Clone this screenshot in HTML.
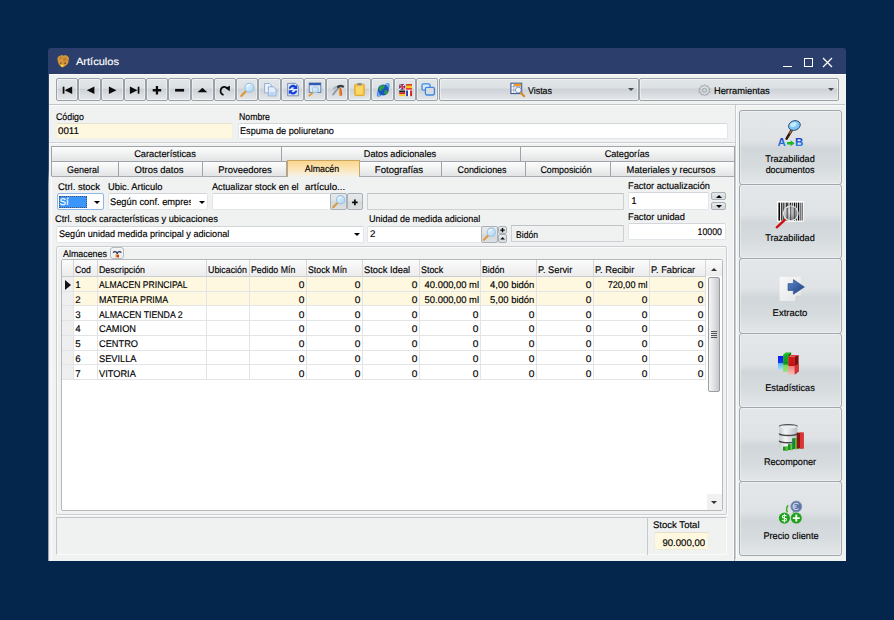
<!DOCTYPE html>
<html>
<head>
<meta charset="utf-8">
<title>Artículos</title>
<style>
*{box-sizing:border-box;margin:0;padding:0}
html,body{width:894px;height:620px;overflow:hidden;background:#04264c}
body{font-family:"Liberation Sans",sans-serif;font-size:9.7px;color:#000;-webkit-text-stroke-width:0.15px;text-rendering:geometricPrecision;position:relative}
.a{position:absolute}
.t{position:absolute;white-space:nowrap}
.tb{position:absolute;border:1px solid #9aa2a9;border-radius:2px;background:linear-gradient(#e2e6e9 0%,#dce1e4 42%,#cdd2d6 50%,#d7dbdf 70%,#e5e8ea 100%);box-shadow:inset 0 0 0 1px rgba(255,255,255,.45)}
.tbs{position:absolute;border:1px solid #a9b0b6;border-radius:2px;background:linear-gradient(#e6e9eb 0%,#dfe3e6 45%,#d3d8db 52%,#dde0e3 100%)}
.tab{position:absolute;border:1px solid #a0a4a8;border-bottom:none;background:linear-gradient(#fcfcfc,#f1f2f2 45%,#e2e4e5)}
.inp{position:absolute;background:#fff;border:1px solid #e2e5e9;border-top-color:#d2d6da;border-radius:2px}
.ro{position:absolute;background:#f0f1f1;border:1px solid #cdd0d3;border-top-color:#bfc2c6}
.sb{position:absolute;border:1px solid #9fa8ad;border-radius:3px;background:linear-gradient(#e3e7e9 0%,#dfe3e6 40%,#d1d6da 52%,#d6dbde 75%,#e2e6e8 100%);box-shadow:inset 0 0 0 1px rgba(255,255,255,.35)}
.hd{position:absolute;background:linear-gradient(#fbfbfb,#ececed);border-right:1px solid #d4d6d9;border-bottom:1px solid #c9ccd0}
.c{position:absolute;border-right:1px solid #e2e4e6;border-bottom:1px solid #e2e4e6;background:#fff}
.y{background:#fff8e0}
.ind{background:#efefef}
</style>
</head>
<body>
<div class="a" style="left:48px;top:48px;width:798px;height:30px;background:#2c3e6b;border-radius:3px 3px 0 0"></div>
<div class="a" style="left:48px;top:74px;width:798px;height:486.5px;background:#f0f1f1"></div>
<div class="a" style="left:48px;top:74px;width:1px;height:486.5px;background:linear-gradient(#2c3e6b 0,#33466f 95px,#8f99ab 110px,#9aa3b3 100%)"></div>
<div class="a" style="left:49px;top:74px;width:797px;height:1px;background:#fbfbfb"></div>
<div class="t" style="top:57.00px;font-size:10.3px;line-height:12px;height:12px;color:#fff;left:75.80px;transform-origin:0 50%;transform:scaleX(1.0731);">Artículos</div>
<div class="a" style="left:782.5px;top:65.5px;width:9px;height:1px;background:#fff"></div>
<div class="a" style="left:803.5px;top:57.5px;width:9px;height:9.5px;border:1.2px solid #fff"></div>
<svg class="a" style="left:822px;top:57px" width="11" height="11" viewBox="0 0 11 11"><path d="M1 1 L10 10 M10 1 L1 10" stroke="#fff" stroke-width="1.25"/></svg>
<div class="a" style="left:49px;top:104px;width:796px;height:1px;background:#c3c6c9"></div>
<div class="a" style="left:49px;top:105px;width:796px;height:1px;background:#fafafa"></div>
<div class="a" style="left:49px;top:142px;width:686px;height:1px;background:#cfd1d4"></div>
<div class="a" style="left:49px;top:143px;width:686px;height:1px;background:#f9f9f9"></div>
<div class="tb" style="left:56px;top:78px;width:22px;height:23px;"></div>
<div class="tb" style="left:78px;top:78px;width:23px;height:23px;"></div>
<div class="tb" style="left:101px;top:78px;width:23px;height:23px;"></div>
<div class="tb" style="left:124px;top:78px;width:22px;height:23px;"></div>
<div class="tb" style="left:146px;top:78px;width:22px;height:23px;"></div>
<div class="tb" style="left:168px;top:78px;width:23px;height:23px;"></div>
<div class="tb" style="left:191px;top:78px;width:23px;height:23px;"></div>
<div class="tb" style="left:214px;top:78px;width:22px;height:23px;"></div>
<div class="tb" style="left:236px;top:78px;width:22px;height:23px;"></div>
<div class="tb" style="left:258px;top:78px;width:23px;height:23px;"></div>
<div class="tb" style="left:281px;top:78px;width:23px;height:23px;"></div>
<div class="tb" style="left:304px;top:78px;width:22px;height:23px;"></div>
<div class="tb" style="left:326px;top:78px;width:22px;height:23px;"></div>
<div class="tb" style="left:348px;top:78px;width:23px;height:23px;"></div>
<div class="tb" style="left:371px;top:78px;width:23px;height:23px;"></div>
<div class="tb" style="left:394px;top:78px;width:22px;height:23px;"></div>
<div class="tb" style="left:416px;top:78px;width:22px;height:23px;"></div>
<div class="tb" style="left:439px;top:78px;width:200px;height:23px;"></div>
<div class="tb" style="left:639px;top:78px;width:200px;height:23px;"></div>
<div class="t" style="top:86.00px;font-size:9.7px;line-height:12px;height:12px;left:527.70px;transform-origin:0 50%;transform:scaleX(0.9146);">Vistas</div>
<div class="t" style="top:86.00px;font-size:9.7px;line-height:12px;height:12px;left:714.00px;transform-origin:0 50%;transform:scaleX(0.9584);">Herramientas</div>
<div class="a" style="left:627.5px;top:88.2px;width:0px;height:0px;border:3px solid transparent;border-top:3px solid #4a4a4a;border-bottom:none"></div>
<div class="a" style="left:828.3px;top:88px;width:0px;height:0px;border:3px solid transparent;border-top:3px solid #4a4a4a;border-bottom:none"></div>
<div class="t" style="top:112.00px;font-size:9.7px;line-height:12px;height:12px;left:55.70px;transform-origin:0 50%;transform:scaleX(0.9076);">Código</div>
<div class="inp" style="left:56px;top:123px;width:177px;height:16px;background:#fff8e0;border-color:#f4f0e2;border-top-color:#e6e2d2"></div>
<div class="t" style="top:126.00px;font-size:9.7px;line-height:12px;height:12px;left:58.10px;transform-origin:0 50%;transform:scaleX(1.0067);">0011</div>
<div class="t" style="top:112.00px;font-size:9.7px;line-height:12px;height:12px;left:238.70px;transform-origin:0 50%;transform:scaleX(0.8985);">Nombre</div>
<div class="inp" style="left:238px;top:123px;width:490px;height:16px;"></div>
<div class="t" style="top:126.00px;font-size:9.7px;line-height:12px;height:12px;left:240.00px;transform-origin:0 50%;transform:scaleX(0.9422);">Espuma de poliuretano</div>
<div class="tab" style="left:51px;top:146px;width:231px;height:15px;"></div>
<div class="t" style="top:149.00px;font-size:9.7px;line-height:12px;height:12px;left:165.30px;transform-origin:0 50%;transform:translateX(-47.770%) scaleX(0.9554);">Características</div>
<div class="tab" style="left:281px;top:146px;width:240px;height:15px;"></div>
<div class="t" style="top:149.00px;font-size:9.7px;line-height:12px;height:12px;left:399.70px;transform-origin:0 50%;transform:translateX(-47.343%) scaleX(0.9469);">Datos adicionales</div>
<div class="tab" style="left:520px;top:146px;width:215px;height:15px;"></div>
<div class="t" style="top:149.00px;font-size:9.7px;line-height:12px;height:12px;left:626.60px;transform-origin:0 50%;transform:translateX(-47.208%) scaleX(0.9442);">Categorías</div>
<div class="tab" style="left:51px;top:161px;width:68px;height:15px;"></div>
<div class="t" style="top:165.00px;font-size:9.7px;line-height:12px;height:12px;left:83.40px;transform-origin:0 50%;transform:translateX(-46.363%) scaleX(0.9273);">General</div>
<div class="tab" style="left:118px;top:161px;width:85px;height:15px;"></div>
<div class="t" style="top:165.00px;font-size:9.7px;line-height:12px;height:12px;left:159.00px;transform-origin:0 50%;transform:translateX(-48.864%) scaleX(0.9773);">Otros datos</div>
<div class="tab" style="left:202px;top:161px;width:85px;height:15px;"></div>
<div class="t" style="top:165.00px;font-size:9.7px;line-height:12px;height:12px;left:244.50px;transform-origin:0 50%;transform:translateX(-48.818%) scaleX(0.9764);">Proveedores</div>
<div class="tab" style="left:359px;top:161px;width:83px;height:15px;"></div>
<div class="t" style="top:165.00px;font-size:9.7px;line-height:12px;height:12px;left:398.90px;transform-origin:0 50%;transform:translateX(-49.221%) scaleX(0.9844);">Fotografías</div>
<div class="tab" style="left:441px;top:161px;width:85px;height:15px;"></div>
<div class="t" style="top:165.00px;font-size:9.7px;line-height:12px;height:12px;left:481.70px;transform-origin:0 50%;transform:translateX(-45.893%) scaleX(0.9179);">Condiciones</div>
<div class="tab" style="left:525px;top:161px;width:86px;height:15px;"></div>
<div class="t" style="top:165.00px;font-size:9.7px;line-height:12px;height:12px;left:566.40px;transform-origin:0 50%;transform:translateX(-45.746%) scaleX(0.9149);">Composición</div>
<div class="tab" style="left:610px;top:161px;width:125px;height:15px;"></div>
<div class="t" style="top:165.00px;font-size:9.7px;line-height:12px;height:12px;left:671.10px;transform-origin:0 50%;transform:translateX(-48.220%) scaleX(0.9644);">Materiales y recursos</div>
<div class="a" style="left:51px;top:176px;width:684px;height:385px;border:1px solid #a7abaf;border-left-color:#fbfbfb;border-bottom:none;background:#f0f1f1"></div>
<div class="a" style="left:733px;top:177px;width:1px;height:383px;background:#fbfbfb"></div>
<div class="a" style="left:287px;top:160px;width:73px;height:17px;border:1px solid #c9a55f;border-bottom:none;background:linear-gradient(#fbd68f,#fce3b1 45%,#f7efdc 85%,#f1f0ec)"></div>
<div class="t" style="top:164.00px;font-size:9.7px;line-height:12px;height:12px;left:322.00px;transform-origin:0 50%;transform:translateX(-45.574%) scaleX(0.9115);">Almacén</div>
<div class="t" style="top:182.00px;font-size:9.7px;line-height:12px;height:12px;left:58.20px;transform-origin:0 50%;transform:scaleX(0.9741);">Ctrl. stock</div>
<div class="t" style="top:182.00px;font-size:9.7px;line-height:12px;height:12px;left:107.60px;transform-origin:0 50%;transform:scaleX(0.9628);">Ubic. Articulo</div>
<div class="t" style="top:182.00px;font-size:9.7px;line-height:12px;height:12px;left:212.30px;transform-origin:0 50%;transform:scaleX(0.9459);">Actualizar stock en el</div>
<div class="t" style="top:182.00px;font-size:9.7px;line-height:12px;height:12px;left:304.90px;transform-origin:0 50%;transform:scaleX(1.0102);">artículo...</div>
<div class="t" style="top:181.00px;font-size:9.7px;line-height:12px;height:12px;left:628.00px;transform-origin:0 50%;transform:scaleX(0.9506);">Factor actualización</div>
<div class="inp" style="left:57px;top:193px;width:47px;height:17px;border:1px solid #8fb6ea"></div>
<div class="a" style="left:59px;top:196px;width:28px;height:12px;background:#3a96fd;outline:1px dotted #4a4f58;outline-offset:-1px"></div>
<div class="t" style="top:197.00px;font-size:9.7px;line-height:12px;height:12px;color:#fff;left:59.50px;transform-origin:0 50%;transform:scaleX(1.0000);">Sí</div>
<div class="a" style="left:94px;top:201px;width:0px;height:0px;border:3px solid transparent;border-top:3px solid #000;border-bottom:none"></div>
<div class="inp" style="left:108px;top:193px;width:100px;height:17px;"></div>
<div class="t" style="top:197.00px;font-size:9.7px;line-height:12px;height:12px;left:110.40px;transform-origin:0 50%;transform:scaleX(0.9590);">Según conf. empres</div>
<div class="a" style="left:191px;top:195px;width:5px;height:13px;background:#fff"></div>
<div class="a" style="left:198.5px;top:201px;width:0px;height:0px;border:3px solid transparent;border-top:3px solid #000;border-bottom:none"></div>
<div class="inp" style="left:212px;top:193px;width:119px;height:17px;"></div>
<div class="tbs" style="left:330px;top:193px;width:17px;height:17px;"></div>
<div class="tbs" style="left:347px;top:193px;width:16px;height:17px;"></div>
<div class="ro" style="left:367px;top:193px;width:257px;height:17px;"></div>
<div class="inp" style="left:628px;top:192px;width:81px;height:18px;"></div>
<div class="t" style="top:196.00px;font-size:9.7px;line-height:12px;height:12px;left:631.30px;transform-origin:0 50%;transform:scaleX(1.0000);">1</div>
<div class="tbs" style="left:711px;top:192px;width:15px;height:8px;"></div>
<div class="tbs" style="left:711px;top:202px;width:15px;height:8px;"></div>
<div class="a" style="left:715.5px;top:194.5px;width:0px;height:0px;border:3px solid transparent;border-bottom:3px solid #000;border-top:none"></div>
<div class="a" style="left:715.5px;top:204.7px;width:0px;height:0px;border:3px solid transparent;border-top:3px solid #000;border-bottom:none"></div>
<div class="t" style="top:214.00px;font-size:9.7px;line-height:12px;height:12px;left:55.20px;transform-origin:0 50%;transform:scaleX(0.9599);">Ctrl. stock características y ubicaciones</div>
<div class="t" style="top:214.00px;font-size:9.7px;line-height:12px;height:12px;left:368.60px;transform-origin:0 50%;transform:scaleX(0.9305);">Unidad de medida adicional</div>
<div class="t" style="top:212.00px;font-size:9.7px;line-height:12px;height:12px;left:628.00px;transform-origin:0 50%;transform:scaleX(0.9610);">Factor unidad</div>
<div class="inp" style="left:56px;top:226px;width:308px;height:17px;"></div>
<div class="t" style="top:229.00px;font-size:9.7px;line-height:12px;height:12px;left:58.50px;transform-origin:0 50%;transform:scaleX(0.9382);">Según unidad medida principal y adicional</div>
<div class="a" style="left:354.3px;top:232.5px;width:0px;height:0px;border:3px solid transparent;border-top:3px solid #000;border-bottom:none"></div>
<div class="inp" style="left:367px;top:226px;width:115px;height:17px;"></div>
<div class="t" style="top:229.00px;font-size:9.7px;line-height:12px;height:12px;left:370.00px;transform-origin:0 50%;transform:scaleX(1.0000);">2</div>
<div class="tbs" style="left:481px;top:226px;width:17px;height:17px;"></div>
<div class="tbs" style="left:498px;top:226px;width:9px;height:8px;"></div>
<div class="tbs" style="left:498px;top:234px;width:9px;height:9px;"></div>
<div class="ro" style="left:511px;top:225px;width:113px;height:17px;"></div>
<div class="t" style="top:230.00px;font-size:9.7px;line-height:12px;height:12px;left:515.60px;transform-origin:0 50%;transform:scaleX(0.8867);">Bidón</div>
<div class="inp" style="left:628px;top:223px;width:98px;height:17px;"></div>
<div class="t" style="top:227.00px;font-size:9.7px;line-height:12px;height:12px;right:171.70px;transform-origin:100% 50%;transform:scaleX(0.9046);">10000</div>
<div class="a" style="left:56px;top:246px;width:671px;height:269px;border:1px solid #cbced1;border-radius:2px;box-shadow:1px 1px 0 #fbfbfb,inset 1px 1px 0 #fbfbfb"></div>
<div class="a" style="left:61px;top:248px;width:47px;height:11px;background:#f0f1f1"></div>
<div class="t" style="top:249.00px;font-size:9.7px;line-height:12px;height:12px;left:62.90px;transform-origin:0 50%;transform:scaleX(0.9169);">Almacenes</div>
<div class="tb" style="left:110px;top:247px;width:14px;height:12px;border-color:#b4b9be;border-radius:3px;background:#eef0f1"></div>
<div class="a" style="left:61px;top:259px;width:662px;height:252px;background:#fff;border:1px solid #b5b9bd;border-radius:2px"></div>
<div class="hd" style="left:62px;top:260px;width:12px;height:17px;"></div>
<div class="hd" style="left:74px;top:260px;width:24px;height:17px;"></div>
<div class="t" style="top:265.00px;font-size:9.7px;line-height:12px;height:12px;left:75.00px;transform-origin:0 50%;transform:scaleX(0.8879);">Cod</div>
<div class="hd" style="left:98px;top:260px;width:109px;height:17px;"></div>
<div class="t" style="top:265.00px;font-size:9.7px;line-height:12px;height:12px;left:99.00px;transform-origin:0 50%;transform:scaleX(0.9077);">Descripción</div>
<div class="hd" style="left:207px;top:260px;width:43px;height:17px;"></div>
<div class="t" style="top:265.00px;font-size:9.7px;line-height:12px;height:12px;left:208.00px;transform-origin:0 50%;transform:scaleX(0.9156);">Ubicación</div>
<div class="hd" style="left:250px;top:260px;width:57px;height:17px;"></div>
<div class="t" style="top:265.00px;font-size:9.7px;line-height:12px;height:12px;left:251.00px;transform-origin:0 50%;transform:scaleX(0.9028);">Pedido Mín</div>
<div class="hd" style="left:307px;top:260px;width:56px;height:17px;"></div>
<div class="t" style="top:265.00px;font-size:9.7px;line-height:12px;height:12px;left:308.00px;transform-origin:0 50%;transform:scaleX(0.9044);">Stock Mín</div>
<div class="hd" style="left:363px;top:260px;width:57px;height:17px;"></div>
<div class="t" style="top:265.00px;font-size:9.7px;line-height:12px;height:12px;left:364.00px;transform-origin:0 50%;transform:scaleX(0.9627);">Stock Ideal</div>
<div class="hd" style="left:420px;top:260px;width:61px;height:17px;"></div>
<div class="t" style="top:265.00px;font-size:9.7px;line-height:12px;height:12px;left:421.00px;transform-origin:0 50%;transform:scaleX(0.9192);">Stock</div>
<div class="hd" style="left:481px;top:260px;width:56px;height:17px;"></div>
<div class="t" style="top:265.00px;font-size:9.7px;line-height:12px;height:12px;left:482.00px;transform-origin:0 50%;transform:scaleX(0.9029);">Bidón</div>
<div class="hd" style="left:537px;top:260px;width:57px;height:17px;"></div>
<div class="t" style="top:265.00px;font-size:9.7px;line-height:12px;height:12px;left:538.00px;transform-origin:0 50%;transform:scaleX(0.9543);">P. Servir</div>
<div class="hd" style="left:594px;top:260px;width:56px;height:17px;"></div>
<div class="t" style="top:265.00px;font-size:9.7px;line-height:12px;height:12px;left:595.00px;transform-origin:0 50%;transform:scaleX(0.9633);">P. Recibir</div>
<div class="hd" style="left:650px;top:260px;width:56px;height:17px;"></div>
<div class="t" style="top:265.00px;font-size:9.7px;line-height:12px;height:12px;left:651.00px;transform-origin:0 50%;transform:scaleX(0.9570);">P. Fabricar</div>
<div class="hd" style="left:706px;top:260px;width:16px;height:17px;border-right:none"></div>
<div class="c ind" style="left:62px;top:277px;width:12px;height:15px;"></div>
<div class="c y" style="left:74px;top:277px;width:24px;height:15px;"></div>
<div class="t" style="top:280.00px;font-size:9.7px;line-height:12px;height:12px;left:75.20px;transform-origin:0 50%;transform:scaleX(1.0000);">1</div>
<div class="c y" style="left:98px;top:277px;width:109px;height:15px;"></div>
<div class="t" style="top:280.00px;font-size:9.7px;line-height:12px;height:12px;left:99.20px;transform-origin:0 50%;transform:scaleX(0.8853);">ALMACEN PRINCIPAL</div>
<div class="c y" style="left:207px;top:277px;width:43px;height:15px;"></div>
<div class="c y" style="left:250px;top:277px;width:57px;height:15px;"></div>
<div class="t" style="top:280.00px;font-size:9.7px;line-height:12px;height:12px;right:589.40px;transform-origin:100% 50%;transform:scaleX(1.0500);">0</div>
<div class="c y" style="left:307px;top:277px;width:56px;height:15px;"></div>
<div class="t" style="top:280.00px;font-size:9.7px;line-height:12px;height:12px;right:533.40px;transform-origin:100% 50%;transform:scaleX(1.0500);">0</div>
<div class="c y" style="left:363px;top:277px;width:57px;height:15px;"></div>
<div class="t" style="top:280.00px;font-size:9.7px;line-height:12px;height:12px;right:476.40px;transform-origin:100% 50%;transform:scaleX(1.0500);">0</div>
<div class="c y" style="left:420px;top:277px;width:61px;height:15px;"></div>
<div class="t" style="top:280.00px;font-size:9.7px;line-height:12px;height:12px;right:415.40px;transform-origin:100% 50%;transform:scaleX(0.9718);">40.000,00 ml</div>
<div class="c y" style="left:481px;top:277px;width:56px;height:15px;"></div>
<div class="t" style="top:280.00px;font-size:9.7px;line-height:12px;height:12px;right:359.40px;transform-origin:100% 50%;transform:scaleX(0.9755);">4,00 bidón</div>
<div class="c y" style="left:537px;top:277px;width:57px;height:15px;"></div>
<div class="t" style="top:280.00px;font-size:9.7px;line-height:12px;height:12px;right:302.40px;transform-origin:100% 50%;transform:scaleX(1.0500);">0</div>
<div class="c y" style="left:594px;top:277px;width:56px;height:15px;"></div>
<div class="t" style="top:280.00px;font-size:9.7px;line-height:12px;height:12px;right:246.40px;transform-origin:100% 50%;transform:scaleX(0.9366);">720,00 ml</div>
<div class="c y" style="left:650px;top:277px;width:56px;height:15px;"></div>
<div class="t" style="top:280.00px;font-size:9.7px;line-height:12px;height:12px;right:190.40px;transform-origin:100% 50%;transform:scaleX(1.0500);">0</div>
<div class="c ind" style="left:62px;top:292px;width:12px;height:14px;"></div>
<div class="c y" style="left:74px;top:292px;width:24px;height:14px;"></div>
<div class="t" style="top:295.00px;font-size:9.7px;line-height:12px;height:12px;left:75.20px;transform-origin:0 50%;transform:scaleX(1.0000);">2</div>
<div class="c y" style="left:98px;top:292px;width:109px;height:14px;"></div>
<div class="t" style="top:295.00px;font-size:9.7px;line-height:12px;height:12px;left:99.20px;transform-origin:0 50%;transform:scaleX(0.9206);">MATERIA PRIMA</div>
<div class="c y" style="left:207px;top:292px;width:43px;height:14px;"></div>
<div class="c y" style="left:250px;top:292px;width:57px;height:14px;"></div>
<div class="t" style="top:295.00px;font-size:9.7px;line-height:12px;height:12px;right:589.40px;transform-origin:100% 50%;transform:scaleX(1.0500);">0</div>
<div class="c y" style="left:307px;top:292px;width:56px;height:14px;"></div>
<div class="t" style="top:295.00px;font-size:9.7px;line-height:12px;height:12px;right:533.40px;transform-origin:100% 50%;transform:scaleX(1.0500);">0</div>
<div class="c y" style="left:363px;top:292px;width:57px;height:14px;"></div>
<div class="t" style="top:295.00px;font-size:9.7px;line-height:12px;height:12px;right:476.40px;transform-origin:100% 50%;transform:scaleX(1.0500);">0</div>
<div class="c y" style="left:420px;top:292px;width:61px;height:14px;"></div>
<div class="t" style="top:295.00px;font-size:9.7px;line-height:12px;height:12px;right:415.40px;transform-origin:100% 50%;transform:scaleX(0.9718);">50.000,00 ml</div>
<div class="c y" style="left:481px;top:292px;width:56px;height:14px;"></div>
<div class="t" style="top:295.00px;font-size:9.7px;line-height:12px;height:12px;right:359.40px;transform-origin:100% 50%;transform:scaleX(0.9755);">5,00 bidón</div>
<div class="c y" style="left:537px;top:292px;width:57px;height:14px;"></div>
<div class="t" style="top:295.00px;font-size:9.7px;line-height:12px;height:12px;right:302.40px;transform-origin:100% 50%;transform:scaleX(1.0500);">0</div>
<div class="c y" style="left:594px;top:292px;width:56px;height:14px;"></div>
<div class="t" style="top:295.00px;font-size:9.7px;line-height:12px;height:12px;right:246.40px;transform-origin:100% 50%;transform:scaleX(1.0500);">0</div>
<div class="c y" style="left:650px;top:292px;width:56px;height:14px;"></div>
<div class="t" style="top:295.00px;font-size:9.7px;line-height:12px;height:12px;right:190.40px;transform-origin:100% 50%;transform:scaleX(1.0500);">0</div>
<div class="c ind" style="left:62px;top:306px;width:12px;height:15px;"></div>
<div class="c" style="left:74px;top:306px;width:24px;height:15px;"></div>
<div class="t" style="top:310.00px;font-size:9.7px;line-height:12px;height:12px;left:75.20px;transform-origin:0 50%;transform:scaleX(1.0000);">3</div>
<div class="c" style="left:98px;top:306px;width:109px;height:15px;"></div>
<div class="t" style="top:310.00px;font-size:9.7px;line-height:12px;height:12px;left:99.20px;transform-origin:0 50%;transform:scaleX(0.9045);">ALMACEN TIENDA 2</div>
<div class="c" style="left:207px;top:306px;width:43px;height:15px;"></div>
<div class="c" style="left:250px;top:306px;width:57px;height:15px;"></div>
<div class="t" style="top:310.00px;font-size:9.7px;line-height:12px;height:12px;right:589.40px;transform-origin:100% 50%;transform:scaleX(1.0500);">0</div>
<div class="c" style="left:307px;top:306px;width:56px;height:15px;"></div>
<div class="t" style="top:310.00px;font-size:9.7px;line-height:12px;height:12px;right:533.40px;transform-origin:100% 50%;transform:scaleX(1.0500);">0</div>
<div class="c" style="left:363px;top:306px;width:57px;height:15px;"></div>
<div class="t" style="top:310.00px;font-size:9.7px;line-height:12px;height:12px;right:476.40px;transform-origin:100% 50%;transform:scaleX(1.0500);">0</div>
<div class="c" style="left:420px;top:306px;width:61px;height:15px;"></div>
<div class="t" style="top:310.00px;font-size:9.7px;line-height:12px;height:12px;right:415.40px;transform-origin:100% 50%;transform:scaleX(1.0500);">0</div>
<div class="c" style="left:481px;top:306px;width:56px;height:15px;"></div>
<div class="t" style="top:310.00px;font-size:9.7px;line-height:12px;height:12px;right:359.40px;transform-origin:100% 50%;transform:scaleX(1.0500);">0</div>
<div class="c" style="left:537px;top:306px;width:57px;height:15px;"></div>
<div class="t" style="top:310.00px;font-size:9.7px;line-height:12px;height:12px;right:302.40px;transform-origin:100% 50%;transform:scaleX(1.0500);">0</div>
<div class="c" style="left:594px;top:306px;width:56px;height:15px;"></div>
<div class="t" style="top:310.00px;font-size:9.7px;line-height:12px;height:12px;right:246.40px;transform-origin:100% 50%;transform:scaleX(1.0500);">0</div>
<div class="c" style="left:650px;top:306px;width:56px;height:15px;"></div>
<div class="t" style="top:310.00px;font-size:9.7px;line-height:12px;height:12px;right:190.40px;transform-origin:100% 50%;transform:scaleX(1.0500);">0</div>
<div class="c ind" style="left:62px;top:321px;width:12px;height:15px;"></div>
<div class="c" style="left:74px;top:321px;width:24px;height:15px;"></div>
<div class="t" style="top:324.00px;font-size:9.7px;line-height:12px;height:12px;left:75.20px;transform-origin:0 50%;transform:scaleX(1.0000);">4</div>
<div class="c" style="left:98px;top:321px;width:109px;height:15px;"></div>
<div class="t" style="top:324.00px;font-size:9.7px;line-height:12px;height:12px;left:99.20px;transform-origin:0 50%;transform:scaleX(0.9550);">CAMION</div>
<div class="c" style="left:207px;top:321px;width:43px;height:15px;"></div>
<div class="c" style="left:250px;top:321px;width:57px;height:15px;"></div>
<div class="t" style="top:324.00px;font-size:9.7px;line-height:12px;height:12px;right:589.40px;transform-origin:100% 50%;transform:scaleX(1.0500);">0</div>
<div class="c" style="left:307px;top:321px;width:56px;height:15px;"></div>
<div class="t" style="top:324.00px;font-size:9.7px;line-height:12px;height:12px;right:533.40px;transform-origin:100% 50%;transform:scaleX(1.0500);">0</div>
<div class="c" style="left:363px;top:321px;width:57px;height:15px;"></div>
<div class="t" style="top:324.00px;font-size:9.7px;line-height:12px;height:12px;right:476.40px;transform-origin:100% 50%;transform:scaleX(1.0500);">0</div>
<div class="c" style="left:420px;top:321px;width:61px;height:15px;"></div>
<div class="t" style="top:324.00px;font-size:9.7px;line-height:12px;height:12px;right:415.40px;transform-origin:100% 50%;transform:scaleX(1.0500);">0</div>
<div class="c" style="left:481px;top:321px;width:56px;height:15px;"></div>
<div class="t" style="top:324.00px;font-size:9.7px;line-height:12px;height:12px;right:359.40px;transform-origin:100% 50%;transform:scaleX(1.0500);">0</div>
<div class="c" style="left:537px;top:321px;width:57px;height:15px;"></div>
<div class="t" style="top:324.00px;font-size:9.7px;line-height:12px;height:12px;right:302.40px;transform-origin:100% 50%;transform:scaleX(1.0500);">0</div>
<div class="c" style="left:594px;top:321px;width:56px;height:15px;"></div>
<div class="t" style="top:324.00px;font-size:9.7px;line-height:12px;height:12px;right:246.40px;transform-origin:100% 50%;transform:scaleX(1.0500);">0</div>
<div class="c" style="left:650px;top:321px;width:56px;height:15px;"></div>
<div class="t" style="top:324.00px;font-size:9.7px;line-height:12px;height:12px;right:190.40px;transform-origin:100% 50%;transform:scaleX(1.0500);">0</div>
<div class="c ind" style="left:62px;top:336px;width:12px;height:15px;"></div>
<div class="c" style="left:74px;top:336px;width:24px;height:15px;"></div>
<div class="t" style="top:339.00px;font-size:9.7px;line-height:12px;height:12px;left:75.20px;transform-origin:0 50%;transform:scaleX(1.0000);">5</div>
<div class="c" style="left:98px;top:336px;width:109px;height:15px;"></div>
<div class="t" style="top:339.00px;font-size:9.7px;line-height:12px;height:12px;left:99.20px;transform-origin:0 50%;transform:scaleX(0.9550);">CENTRO</div>
<div class="c" style="left:207px;top:336px;width:43px;height:15px;"></div>
<div class="c" style="left:250px;top:336px;width:57px;height:15px;"></div>
<div class="t" style="top:339.00px;font-size:9.7px;line-height:12px;height:12px;right:589.40px;transform-origin:100% 50%;transform:scaleX(1.0500);">0</div>
<div class="c" style="left:307px;top:336px;width:56px;height:15px;"></div>
<div class="t" style="top:339.00px;font-size:9.7px;line-height:12px;height:12px;right:533.40px;transform-origin:100% 50%;transform:scaleX(1.0500);">0</div>
<div class="c" style="left:363px;top:336px;width:57px;height:15px;"></div>
<div class="t" style="top:339.00px;font-size:9.7px;line-height:12px;height:12px;right:476.40px;transform-origin:100% 50%;transform:scaleX(1.0500);">0</div>
<div class="c" style="left:420px;top:336px;width:61px;height:15px;"></div>
<div class="t" style="top:339.00px;font-size:9.7px;line-height:12px;height:12px;right:415.40px;transform-origin:100% 50%;transform:scaleX(1.0500);">0</div>
<div class="c" style="left:481px;top:336px;width:56px;height:15px;"></div>
<div class="t" style="top:339.00px;font-size:9.7px;line-height:12px;height:12px;right:359.40px;transform-origin:100% 50%;transform:scaleX(1.0500);">0</div>
<div class="c" style="left:537px;top:336px;width:57px;height:15px;"></div>
<div class="t" style="top:339.00px;font-size:9.7px;line-height:12px;height:12px;right:302.40px;transform-origin:100% 50%;transform:scaleX(1.0500);">0</div>
<div class="c" style="left:594px;top:336px;width:56px;height:15px;"></div>
<div class="t" style="top:339.00px;font-size:9.7px;line-height:12px;height:12px;right:246.40px;transform-origin:100% 50%;transform:scaleX(1.0500);">0</div>
<div class="c" style="left:650px;top:336px;width:56px;height:15px;"></div>
<div class="t" style="top:339.00px;font-size:9.7px;line-height:12px;height:12px;right:190.40px;transform-origin:100% 50%;transform:scaleX(1.0500);">0</div>
<div class="c ind" style="left:62px;top:351px;width:12px;height:14px;"></div>
<div class="c" style="left:74px;top:351px;width:24px;height:14px;"></div>
<div class="t" style="top:354.00px;font-size:9.7px;line-height:12px;height:12px;left:75.20px;transform-origin:0 50%;transform:scaleX(1.0000);">6</div>
<div class="c" style="left:98px;top:351px;width:109px;height:14px;"></div>
<div class="t" style="top:354.00px;font-size:9.7px;line-height:12px;height:12px;left:99.20px;transform-origin:0 50%;transform:scaleX(0.9550);">SEVILLA</div>
<div class="c" style="left:207px;top:351px;width:43px;height:14px;"></div>
<div class="c" style="left:250px;top:351px;width:57px;height:14px;"></div>
<div class="t" style="top:354.00px;font-size:9.7px;line-height:12px;height:12px;right:589.40px;transform-origin:100% 50%;transform:scaleX(1.0500);">0</div>
<div class="c" style="left:307px;top:351px;width:56px;height:14px;"></div>
<div class="t" style="top:354.00px;font-size:9.7px;line-height:12px;height:12px;right:533.40px;transform-origin:100% 50%;transform:scaleX(1.0500);">0</div>
<div class="c" style="left:363px;top:351px;width:57px;height:14px;"></div>
<div class="t" style="top:354.00px;font-size:9.7px;line-height:12px;height:12px;right:476.40px;transform-origin:100% 50%;transform:scaleX(1.0500);">0</div>
<div class="c" style="left:420px;top:351px;width:61px;height:14px;"></div>
<div class="t" style="top:354.00px;font-size:9.7px;line-height:12px;height:12px;right:415.40px;transform-origin:100% 50%;transform:scaleX(1.0500);">0</div>
<div class="c" style="left:481px;top:351px;width:56px;height:14px;"></div>
<div class="t" style="top:354.00px;font-size:9.7px;line-height:12px;height:12px;right:359.40px;transform-origin:100% 50%;transform:scaleX(1.0500);">0</div>
<div class="c" style="left:537px;top:351px;width:57px;height:14px;"></div>
<div class="t" style="top:354.00px;font-size:9.7px;line-height:12px;height:12px;right:302.40px;transform-origin:100% 50%;transform:scaleX(1.0500);">0</div>
<div class="c" style="left:594px;top:351px;width:56px;height:14px;"></div>
<div class="t" style="top:354.00px;font-size:9.7px;line-height:12px;height:12px;right:246.40px;transform-origin:100% 50%;transform:scaleX(1.0500);">0</div>
<div class="c" style="left:650px;top:351px;width:56px;height:14px;"></div>
<div class="t" style="top:354.00px;font-size:9.7px;line-height:12px;height:12px;right:190.40px;transform-origin:100% 50%;transform:scaleX(1.0500);">0</div>
<div class="c ind" style="left:62px;top:365px;width:12px;height:15px;"></div>
<div class="c" style="left:74px;top:365px;width:24px;height:15px;"></div>
<div class="t" style="top:369.00px;font-size:9.7px;line-height:12px;height:12px;left:75.20px;transform-origin:0 50%;transform:scaleX(1.0000);">7</div>
<div class="c" style="left:98px;top:365px;width:109px;height:15px;"></div>
<div class="t" style="top:369.00px;font-size:9.7px;line-height:12px;height:12px;left:99.20px;transform-origin:0 50%;transform:scaleX(0.9550);">VITORIA</div>
<div class="c" style="left:207px;top:365px;width:43px;height:15px;"></div>
<div class="c" style="left:250px;top:365px;width:57px;height:15px;"></div>
<div class="t" style="top:369.00px;font-size:9.7px;line-height:12px;height:12px;right:589.40px;transform-origin:100% 50%;transform:scaleX(1.0500);">0</div>
<div class="c" style="left:307px;top:365px;width:56px;height:15px;"></div>
<div class="t" style="top:369.00px;font-size:9.7px;line-height:12px;height:12px;right:533.40px;transform-origin:100% 50%;transform:scaleX(1.0500);">0</div>
<div class="c" style="left:363px;top:365px;width:57px;height:15px;"></div>
<div class="t" style="top:369.00px;font-size:9.7px;line-height:12px;height:12px;right:476.40px;transform-origin:100% 50%;transform:scaleX(1.0500);">0</div>
<div class="c" style="left:420px;top:365px;width:61px;height:15px;"></div>
<div class="t" style="top:369.00px;font-size:9.7px;line-height:12px;height:12px;right:415.40px;transform-origin:100% 50%;transform:scaleX(1.0500);">0</div>
<div class="c" style="left:481px;top:365px;width:56px;height:15px;"></div>
<div class="t" style="top:369.00px;font-size:9.7px;line-height:12px;height:12px;right:359.40px;transform-origin:100% 50%;transform:scaleX(1.0500);">0</div>
<div class="c" style="left:537px;top:365px;width:57px;height:15px;"></div>
<div class="t" style="top:369.00px;font-size:9.7px;line-height:12px;height:12px;right:302.40px;transform-origin:100% 50%;transform:scaleX(1.0500);">0</div>
<div class="c" style="left:594px;top:365px;width:56px;height:15px;"></div>
<div class="t" style="top:369.00px;font-size:9.7px;line-height:12px;height:12px;right:246.40px;transform-origin:100% 50%;transform:scaleX(1.0500);">0</div>
<div class="c" style="left:650px;top:365px;width:56px;height:15px;"></div>
<div class="t" style="top:369.00px;font-size:9.7px;line-height:12px;height:12px;right:190.40px;transform-origin:100% 50%;transform:scaleX(1.0500);">0</div>
<div class="a" style="left:65px;top:279.5px;width:0px;height:0px;border:5px solid transparent;border-left:6px solid #111;border-right:none"></div>
<div class="a" style="left:706px;top:276px;width:16px;height:234px;background:#fff"></div>
<div class="a" style="left:708px;top:277px;width:12px;height:115px;border:1px solid #9a9ea3;border-radius:2px;background:linear-gradient(to right,#f6f6f6,#e2e3e4 45%,#c6c8ca)"></div>
<div class="a" style="left:710.5px;top:331px;width:6px;height:1px;background:#555"></div>
<div class="a" style="left:710.5px;top:333px;width:6px;height:1px;background:#555"></div>
<div class="a" style="left:710.5px;top:335px;width:6px;height:1px;background:#555"></div>
<div class="a" style="left:710.5px;top:337px;width:6px;height:1px;background:#555"></div>
<div class="a" style="left:711.2px;top:267.5px;width:0px;height:0px;border:3px solid transparent;border-bottom:3px solid #333;border-top:none"></div>
<div class="a" style="left:707px;top:494px;width:15px;height:16px;background:#f1f1f1"></div>
<div class="a" style="left:711px;top:500.5px;width:0px;height:0px;border:3px solid transparent;border-top:3px solid #333;border-bottom:none"></div>
<div class="a" style="left:56px;top:517px;width:671px;height:38px;border:1px solid #c2c5c9;border-right-color:#fbfbfb;border-bottom-color:#fbfbfb"></div>
<div class="a" style="left:647px;top:517px;width:1px;height:38px;background:#c6c9cd"></div>
<div class="t" style="top:520.00px;font-size:9.7px;line-height:12px;height:12px;left:652.90px;transform-origin:0 50%;transform:scaleX(0.9858);">Stock Total</div>
<div class="inp" style="left:654px;top:532px;width:55px;height:18px;background:#fff8e0;border-color:#efece0;border-top-color:#e2ded0"></div>
<div class="t" style="top:538.00px;font-size:9.7px;line-height:12px;height:12px;right:189.30px;transform-origin:100% 50%;transform:scaleX(0.9895);">90.000,00</div>
<div class="a" style="left:735px;top:105px;width:1px;height:454px;background:#c9ccd0"></div>
<div class="a" style="left:736px;top:105px;width:1px;height:454px;background:#fafafa"></div>
<div class="sb" style="left:739px;top:110px;width:103px;height:75px;"></div>
<div class="sb" style="left:739px;top:184px;width:103px;height:75px;"></div>
<div class="sb" style="left:739px;top:258px;width:103px;height:76px;"></div>
<div class="sb" style="left:739px;top:333px;width:103px;height:75px;"></div>
<div class="sb" style="left:739px;top:407px;width:103px;height:75px;"></div>
<div class="sb" style="left:739px;top:481px;width:103px;height:75px;"></div>
<div class="t" style="top:154.00px;font-size:9.7px;line-height:12px;height:12px;left:789.60px;transform-origin:0 50%;transform:translateX(-47.255%) scaleX(0.9451);">Trazabilidad</div>
<div class="t" style="top:165.00px;font-size:9.7px;line-height:12px;height:12px;left:790.00px;transform-origin:0 50%;transform:translateX(-46.173%) scaleX(0.9235);">documentos</div>
<div class="t" style="top:233.00px;font-size:9.7px;line-height:12px;height:12px;left:789.60px;transform-origin:0 50%;transform:translateX(-47.255%) scaleX(0.9451);">Trazabilidad</div>
<div class="t" style="top:308.00px;font-size:9.7px;line-height:12px;height:12px;left:790.00px;transform-origin:0 50%;transform:translateX(-48.904%) scaleX(0.9781);">Extracto</div>
<div class="t" style="top:383.00px;font-size:9.7px;line-height:12px;height:12px;left:789.60px;transform-origin:0 50%;transform:translateX(-47.424%) scaleX(0.9485);">Estadísticas</div>
<div class="t" style="top:457.00px;font-size:9.7px;line-height:12px;height:12px;left:789.80px;transform-origin:0 50%;transform:translateX(-47.087%) scaleX(0.9417);">Recomponer</div>
<div class="t" style="top:531.00px;font-size:9.7px;line-height:12px;height:12px;left:790.60px;transform-origin:0 50%;transform:translateX(-47.484%) scaleX(0.9497);">Precio cliente</div>

<svg class="a" style="left:0;top:0" width="894" height="620" viewBox="0 0 894 620">
<defs>
<linearGradient id="gl" x1="0" y1="0" x2="1" y2="1"><stop offset="0" stop-color="#eaf6fe"/><stop offset="1" stop-color="#a9d4f4"/></linearGradient>
<linearGradient id="gb" x1="0" y1="0" x2="0" y2="1"><stop offset="0" stop-color="#1b36b8"/><stop offset="1" stop-color="#2aa2f6"/></linearGradient>
<linearGradient id="b1" x1="0" y1="0" x2="0" y2="1"><stop offset="0" stop-color="#0c1cf0"/><stop offset=".5" stop-color="#1838f0"/><stop offset=".55" stop-color="#58b8f8"/><stop offset="1" stop-color="#a8e0fa"/></linearGradient>
<linearGradient id="b2" x1="0" y1="0" x2="0" y2="1"><stop offset="0" stop-color="#18b020"/><stop offset=".55" stop-color="#109028"/><stop offset=".6" stop-color="#78d850"/><stop offset="1" stop-color="#98e078"/></linearGradient>
<linearGradient id="b3" x1="0" y1="0" x2="0" y2="1"><stop offset="0" stop-color="#d81818"/><stop offset=".5" stop-color="#c01414"/><stop offset=".55" stop-color="#f08080"/><stop offset="1" stop-color="#f8c0b8"/></linearGradient>
<linearGradient id="cy" x1="0" y1="0" x2="1" y2="0"><stop offset="0" stop-color="#c9ccd0"/><stop offset=".35" stop-color="#f4f5f6"/><stop offset="1" stop-color="#b9bdc2"/></linearGradient>
<linearGradient id="ar" x1="0" y1="0" x2="1" y2="1"><stop offset="0" stop-color="#5a8ad0"/><stop offset="1" stop-color="#1d3c78"/></linearGradient>
<radialGradient id="ln" cx=".4" cy=".35" r=".7"><stop offset="0" stop-color="#f4f4f4"/><stop offset=".6" stop-color="#b8bcc0"/><stop offset="1" stop-color="#70757a"/></radialGradient>
<linearGradient id="pg" x1="0" y1="0" x2="1" y2="1"><stop offset="0" stop-color="#f8f8f8"/><stop offset="1" stop-color="#e4e5e6"/></linearGradient>
<g id="mag"><path d="M-3.2 3.4 L-7.4 7.6" stroke="#dc9a3c" stroke-width="2.1" stroke-linecap="round"/><circle cx="0" cy="0" r="4.1" fill="url(#gl)" stroke="#9cc2e4" stroke-width="1.1"/><path d="M-2.2 -1 A2.6 2.6 0 0 1 0.6 -2.7" stroke="#fff" stroke-width="1" fill="none"/></g>
</defs>
<!-- title icon -->
<g>
<path d="M57.400 58.200 L58.600 56.200 L60.500 55.600 L62 54.900 L63.600 55.800 L65.200 55 L67.200 55.800 L68.600 57.200 L69.200 58.600 L68.400 60.400 L68.600 62 L67.600 64 L66 65.600 L64 66.800 L62.400 67.400 L60.600 66.400 L59 64.600 L58.200 62.400 L57.600 60.400Z" fill="#d2953c"/>
<path d="M59.200 57.200 q1.400-1.400 2.600-.2 q.2 1.600-1.200 2 q-1.400-.4-1.400-1.800z M63 58.400 q1.800-1.600 3.600-.2 q.2 2.400-1.800 3.400 q-2-.8-1.800-3.200z" fill="#b9802e"/>
<path d="M60 62.400 h1.800 v1.400 h-1.800z M64.200 62.600 h1.800 v1.300 h-1.800z" fill="#8a5a20"/>
<path d="M60.800 64.800 h3 l-.6 1.500 l-1 .6 l-1-.6z" fill="#f6e032"/>
</g>
<!-- nav buttons -->
<g fill="#0c0c0c">
<rect x="62.700" y="86.700" width="1.700" height="7"/><path d="M72.200 86.500 V93.900 L64.600 90.200Z"/>
<path d="M94.400 86.500 V93.900 L86.800 90.200Z"/>
<path d="M108.900 86.500 V93.900 L116.500 90.200Z"/>
<path d="M129.900 86.500 V93.900 L137.500 90.200Z"/><rect x="137.700" y="86.700" width="1.700" height="7"/>
<path d="M152.700 89.100 h8.500 v2.300 h-8.500z M155.800 86 h2.300 v8.500 h-2.300z"/>
<rect x="175.100" y="88.900" width="9" height="2.700"/>
<path d="M197.500 92.300 H207.300 L202.400 87.700Z"/>
<path d="M223.600 95 Q220.300 94 220.600 90.300 Q221.200 86.800 224.600 86.900 Q226.600 87.100 227.600 88.600" fill="none" stroke="#0c0c0c" stroke-width="1.700"/>
<path d="M225.200 88.100 L230 85.800 L229.700 91.200Z"/>
</g>
<!-- magnifier -->
<use href="#mag" transform="translate(249.300 87.700) scale(1.080)"/>
<!-- copy -->
<g stroke="#86a8d8" stroke-width=".9">
<path d="M264.600 83.500 h5 l2.400 2.400 v7 h-7.400z" fill="#eef4fc"/>
<path d="M268.300 86.800 h5.200 l2.500 2.500 v6.600 h-7.700z" fill="#e4eefa"/>
<path d="M269.600 92 h5.200 v3 h-5.200z" fill="#bcd6f2" stroke="none"/>
</g>
<!-- refresh page -->
<g>
<path d="M287.600 83.400 h8 l2.800 2.800 v9.600 h-10.800z" fill="#dfe7f6" stroke="#7686b0" stroke-width=".9"/>
<g transform="translate(293 89.700) scale(1.250) translate(-293 -89.700)">
<path d="M289.600 89 a3.400 3.400 0 0 1 5.800-2.200 l1-1 v3.400 h-3.400 l1.100-1.100 a1.900 1.900 0 0 0-3 .9z" fill="#1040d8"/>
<path d="M296.400 90.400 a3.400 3.400 0 0 1-5.800 2.200 l-1 1 v-3.400 h3.400 l-1.100 1.100 a1.900 1.900 0 0 0 3-.9z" fill="#1040d8"/>
</g>
</g>
<!-- window + magnifier -->
<g>
<rect x="309.200" y="83" width="11.600" height="9.400" fill="#dfe7f2" stroke="#5578b4" stroke-width=".9"/>
<rect x="309.200" y="83" width="11.600" height="2.200" fill="#2d5cb2"/>
<path d="M312.800 92.600 L309.400 95.600" stroke="#dc9a3c" stroke-width="1.900" stroke-linecap="round"/>
<circle cx="315.400" cy="89.700" r="3.100" fill="url(#gl)" stroke="#9cc2e4" stroke-width="1"/>
</g>
<!-- tools -->
<g>
<path d="M333 94.600 L339.800 86" stroke="#8f99a6" stroke-width="1.800" stroke-linecap="round"/>
<path d="M332.600 88.600 l2.200-2.600 l2 1.200 l-2.600 3z" fill="#aab4c0"/>
<path d="M336.200 86.600 q3.600-3.400 8.200-.6 l-.8 1.800 q-3.400-1.600-5.600.6z" fill="#3c4048"/>
<path d="M339 88.400 l2.200-.4 l1 7.600 l-2.400 .2z" fill="#d8541c"/>
<path d="M339 88.400 l1.100-.2 l.7 7.700 l-1.200 .1z" fill="#f0a020"/>
</g>
<!-- clipboard -->
<g>
<rect x="354.700" y="84.200" width="9.600" height="11.400" rx="1" fill="#f6c440" stroke="#dca528" stroke-width=".9"/>
<rect x="356.200" y="86.200" width="6.600" height="8" fill="#fad868"/>
<rect x="357.300" y="83" width="4.400" height="2.400" rx=".8" fill="#8a8e94"/>
</g>
<!-- globe -->
<g>
<ellipse cx="383.200" cy="89.900" rx="7" ry="2.400" transform="rotate(-38 383.200 89.900)" fill="none" stroke="#4a96ea" stroke-width="1.300"/>
<circle cx="383.300" cy="89.900" r="5.500" fill="#1a55c0"/>
<path d="M379.800 86.400 q2.400-2 4.800-.8 q.8 2-1.400 3.200 q-1.800 .4-2 2.600 q-2.200-.6-2.600-2.800z M384.600 90.600 q2.400-.8 3.400 1 q-.6 2.400-2.800 3.200 q-1.600-1.800-.6-4.200z" fill="#2ea040"/>
<path d="M378.300 93.400 q-1.600 1.800-.6 2.600 q1.200 .6 3.400-.8" fill="none" stroke="#4a96ea" stroke-width="1.200"/>
<path d="M388.200 86.300 q1.400-1.800 .4-2.600 q-1.200-.6-3.200 .8" fill="none" stroke="#4a96ea" stroke-width="1.200"/>
</g>
<!-- flags -->
<g>
<rect x="399.200" y="84.100" width="12.800" height="12" fill="#f4f0f0"/>
<rect x="399.200" y="84.100" width="6" height="5.500" fill="#2c3c9c"/>
<path d="M399.200 84.100 l6 5.500 M405.200 84.100 l-6 5.500" stroke="#fff" stroke-width="1.100"/>
<path d="M399.200 84.100 l6 5.500" stroke="#d82020" stroke-width=".6"/>
<path d="M402.200 84.100 v5.500 M399.200 86.850 h6" stroke="#d82020" stroke-width="1"/>
<rect x="406.100" y="84.100" width="5.900" height="5.500" fill="#d82020"/><rect x="406.100" y="85.500" width="5.900" height="2.700" fill="#f8c820"/>
<rect x="399.200" y="90.500" width="6" height="1.900" fill="#181818"/><rect x="399.200" y="92.400" width="6" height="1.900" fill="#d82020"/><rect x="399.200" y="94.300" width="6" height="1.800" fill="#f8c820"/>
<rect x="406.100" y="90.500" width="2" height="5.600" fill="#2840b0"/><rect x="408.100" y="90.500" width="2" height="5.600" fill="#fff"/><rect x="410.100" y="90.500" width="1.900" height="5.600" fill="#d82020"/>
</g>
<!-- windows -->
<g stroke="#3c88e0" stroke-width="1.300">
<rect x="422" y="83.800" width="8" height="6.400" rx="1.400" fill="#dce8f6"/>
<rect x="425.400" y="87.400" width="9" height="7.600" rx="1.400" fill="#d8dde2"/>
</g>
<!-- Vistas icon -->
<g>
<rect x="510.900" y="83.200" width="10.800" height="10.400" fill="#fff" stroke="#2c4a88" stroke-width="1"/>
<rect x="514" y="83.800" width="7.200" height="2.200" fill="#f49a1c"/>
<path d="M513.800 83.800 v9.600 M511 86.600 h10.600 M511 90 h4" stroke="#8894ac" stroke-width=".7"/>
<circle cx="518.300" cy="90" r="2.900" fill="#eef4fa" stroke="#7a8eb4" stroke-width=".9"/>
<path d="M521 93 L524.200 96.200" stroke="#d88a24" stroke-width="2.200" stroke-linecap="round"/>
</g>
<!-- gear -->
<g fill="none" stroke="#a2a7ad" stroke-width="1">
<circle cx="704.500" cy="90.300" r="2"/>
<path d="M704.500 84.600 l1.300 1.700 l2-.6 l.3 2.100 l2 .7 l-.9 1.800 l.9 1.800 l-2 .7 l-.3 2.100 l-2-.6 l-1.300 1.700 l-1.300-1.700 l-2 .6 l-.3-2.100 l-2-.7 l.9-1.800 l-.9-1.800 l2-.7 l.3-2.100 l2 .6z"/>
</g>
<!-- form magnifiers + plus -->
<use href="#mag" transform="translate(340.600 199.700)"/>
<use href="#mag" transform="translate(491.300 232.200)"/>
<path d="M352.100 201.500 h5.600 v1.700 h-5.600z M354.050 199.550 h1.700 v5.600 h-1.700z" fill="#0c0c0c"/>
<path d="M500.300 229.400 h4.400 v1.400 h-4.400z M501.800 227.900 h1.400 v4.400 h-1.400z" fill="#0c0c0c"/>
<path d="M500.300 239.600 h4.600 l-2.300-2.600z" fill="#0c0c0c"/>
<!-- almacenes icon -->
<g>
<path d="M113 252.600 q1.700-1.700 3.500-.3 l.7 1.400 l.7-1.400 q1.800-1.400 3.500 .3" fill="none" stroke="#2c3050" stroke-width="1.200"/>
<rect x="115.600" y="254.600" width="3.400" height="2.800" fill="#e08a18"/><rect x="117.300" y="255.200" width="1.600" height="2" fill="#e01818"/>
</g>
<!-- side 1: trazabilidad documentos -->
<g>
<path d="M791.800 130 L786.600 138.600" stroke="#3a1c10" stroke-width="2.600" stroke-linecap="round"/>
<path d="M791.600 130.400 L789.600 133.600" stroke="#b87838" stroke-width="1.200"/>
<ellipse cx="794.400" cy="125.500" rx="6" ry="4.700" transform="rotate(-20 794.400 125.500)" fill="#7cc8f6" stroke="#2c4a70" stroke-width=".9"/>
<ellipse cx="793.400" cy="124.600" rx="3.400" ry="2.200" transform="rotate(-20 793.400 124.600)" fill="#c4e8fc"/>
<text x="777.600" y="146.200" font-family="Liberation Sans, sans-serif" font-weight="bold" font-size="11.500" fill="url(#gb)">A</text>
<text x="795" y="146.200" font-family="Liberation Sans, sans-serif" font-weight="bold" font-size="11.500" fill="url(#gb)">B</text>
<path d="M787 141.900 h3.600 v-1.700 l4 3 l-4 3 v-1.700 h-3.600z" fill="#18b828"/>
</g>
<!-- side 2: barcode -->
<g>
<rect x="777" y="201" width="26.700" height="20.700" fill="#fff"/>
<g fill="#0a0a0a">
<rect x="778.400" y="202.600" width="1.700" height="18"/><rect x="781" y="202.600" width=".8" height="18"/><rect x="782.600" y="202.600" width="1.100" height="18"/><rect x="784.600" y="202.600" width=".7" height="18"/><rect x="786.200" y="202.600" width="1.500" height="18"/><rect x="788.600" y="202.600" width=".7" height="18"/><rect x="790.200" y="202.600" width="1.100" height="18"/><rect x="792.200" y="202.600" width=".7" height="18"/><rect x="793.800" y="202.600" width="1.500" height="18"/><rect x="796.200" y="202.600" width=".8" height="18"/><rect x="797.800" y="202.600" width="1.500" height="18"/><rect x="800.200" y="202.600" width=".8" height="18" fill="#555"/><rect x="801.600" y="202.600" width="1.100" height="18" fill="#444"/>
</g>
<path d="M784.800 219.800 L776.800 227.300" stroke="#d01010" stroke-width="2.400" stroke-linecap="round"/>
<circle cx="790.800" cy="213.300" r="7.300" fill="url(#ln)" fill-opacity=".82" stroke="#e8e8e8" stroke-width="1.200"/>
<g fill="#222" fill-opacity=".55"><rect x="786.600" y="208" width="1.600" height="10.600"/><rect x="790" y="206.400" width="1.400" height="13.800"/><rect x="793.600" y="207.600" width="1.800" height="11.400"/></g>
</g>
<!-- side 3: extracto -->
<g>
<path d="M779.600 276.800 h21.200 v18.600 l-5.600 5.600 h-15.600z" fill="url(#pg)"/>
<path d="M795.200 301 l.6-5 l5-.6z" fill="#cfd1d3"/>
<path d="M788 283.600 h5.400 v-4 l11 7.400 l-11 7.300 v-3.800 h-5.400z" fill="url(#ar)" stroke="#2a4c8c" stroke-width=".6" stroke-linejoin="round"/>
</g>
<!-- side 4: estadisticas -->
<g>
<rect x="778" y="356" width="5.200" height="13.800" fill="url(#b1)"/>
<path d="M783.100 355 l2.600-2.600 h5.400 l-2.700 2.600z" fill="#20c020"/>
<rect x="783.100" y="354.800" width="5.300" height="17" fill="url(#b2)"/>
<path d="M788.300 357.400 l2.800-2.600 v-2.400 l-2.800 2.600z" fill="#0c600c"/>
<rect x="788.300" y="356.600" width="6.600" height="18" fill="url(#b3)"/>
<path d="M794.800 356.600 l3.800-1.600 v16.600 l-3.800 3z" fill="#801010"/>
<path d="M794.800 365.600 l3.800-1.600 v7.600 l-3.800 3z" fill="#d83030"/>
<path d="M788.300 356.600 l3.600-1.600 h6.700 l-3.800 1.600z" fill="#e83030"/>
</g>
<!-- side 5: recomponer -->
<g>
<path d="M779.300 426.600 v20.400 a9 2 0 0 0 18 0 v-20.400z" fill="url(#cy)"/>
<ellipse cx="788.300" cy="426.600" rx="9" ry="2" fill="#e9ebed"/>
<path d="M779.300 426.600 a9 2 0 0 1 18 0" fill="none" stroke="#4a4e53" stroke-width="1.300"/>
<path d="M779.300 433.600 a9 2 0 0 0 18 0" fill="none" stroke="#44484d" stroke-width="1.500"/>
<path d="M779.300 440.800 a9 2 0 0 0 18 0" fill="none" stroke="#44484d" stroke-width="1.500"/>
<rect x="783" y="446.600" width="5" height="4" fill="#189030"/><rect x="785.400" y="446.600" width="2.600" height="4" fill="#60c030"/>
<rect x="788" y="444.200" width="4.600" height="5.900" fill="#189030"/><rect x="790.300" y="444.200" width="2.300" height="5.900" fill="#70c838"/>
<rect x="792.200" y="438.200" width="6.300" height="10.900" fill="#108838"/><rect x="795.300" y="438.200" width="3.200" height="10.900" fill="#80c830"/>
<rect x="796.700" y="432.600" width="6.900" height="15.900" fill="#8c1414"/><rect x="800" y="432.600" width="3.600" height="15.900" fill="#e03434"/>
</g>
<!-- side 6: precio cliente -->
<g>
<path d="M787.400 512.400 Q785.400 508 788.200 505.400" fill="none" stroke="#48a828" stroke-width="1.500"/>
<path d="M793 512.600 L794.600 510.600" stroke="#48a828" stroke-width="1.300"/>
<circle cx="796.300" cy="506.500" r="5.500" fill="#5c74a8"/>
<circle cx="796.300" cy="506.500" r="5.500" fill="none" stroke="#8898bc" stroke-width=".8"/>
<path d="M798.600 504.300 A3.200 3.200 0 1 0 798.600 508.700 M792.600 505.700 h4 M792.600 507.300 h4" fill="none" stroke="#d4dae8" stroke-width="1.100"/>
<circle cx="784.400" cy="518.100" r="5.600" fill="#20a01c"/>
<path d="M786.600 516 q-2.200-1.600-4 0 q-.8 1.600 1.800 2.100 q2.800 .6 1.800 2.200 q-1.800 1.500-4.200-.2 M784.400 513.800 v8.600" fill="none" stroke="#eafbe8" stroke-width="1.100"/>
<circle cx="796.300" cy="518.100" r="5.500" fill="#20a01c"/>
<path d="M792.800 518.100 h7 M796.300 514.600 v7" stroke="#f4fff2" stroke-width="1.900"/>
</g>
</svg>

</body>
</html>
